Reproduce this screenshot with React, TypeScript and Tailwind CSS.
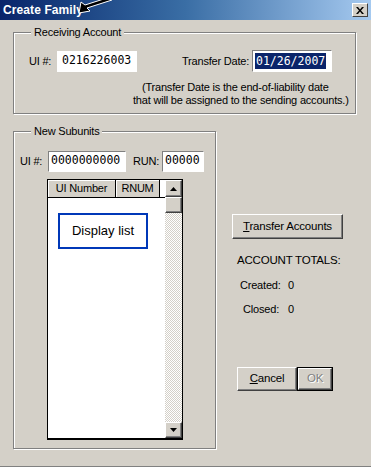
import React from "react";

const F = { fontFamily: '"Liberation Sans", Arial, sans-serif' };
const M = { fontFamily: '"DejaVu Sans Mono", "Liberation Mono", monospace' };

function Group({ label, className, children }: { label: string; className: string; children: React.ReactNode }) {
  return (
    <div className={"relative border border-[#808080] shadow-[inset_1px_1px_0_#ffffff,1px_1px_0_#ffffff] " + className}>
      <span className="absolute left-[17px] top-[-8px] bg-[#d4d0c8] px-[3px] text-[11px] leading-[14px] text-black">{label}</span>
      {children}
    </div>
  );
}

function Sunken({ className, children }: { className: string; children: React.ReactNode }) {
  return (
    <div className={"border-t border-l border-[#808080] border-b border-r border-b-white border-r-white bg-white " + className}>
      {children}
    </div>
  );
}

function Btn({ className, children }: { className: string; children: React.ReactNode }) {
  return (
    <div className={"flex items-center justify-center bg-[#d4d0c8] border border-t-white border-l-white border-b-[#404040] border-r-[#404040] shadow-[inset_-1px_-1px_0_#808080] text-[11.5px] " + className}>
      {children}
    </div>
  );
}

export default function App() {
  return (
    <div className="relative w-[371px] h-[467px] bg-[#d4d0c8] overflow-hidden border-b border-[#808080] tracking-[-0.2px] text-black" style={F}>
      {/* title bar */}
      <div className="h-[20px] flex items-center pl-[3px] bg-gradient-to-r from-[#0a246a] via-[#3a6ea5] to-[#a6caf0]">
        <span className="text-white font-bold text-[12px] leading-none tracking-[0.1px]">Create Family</span>
        <div className="ml-auto mr-[3px] w-[16px] h-[14px] flex items-center justify-center bg-[#d4d0c8] border border-t-white border-l-white border-b-[#404040] border-r-[#404040]">
          <svg width="8" height="7" viewBox="0 0 8 7">
            <path d="M0 0h2l2 2.5L6 0h2L5 3.5 8 7H6L4 4.5 2 7H0l3-3.5z" fill="#000" />
          </svg>
        </div>
      </div>
      {/* annotation arrow */}
      <svg className="absolute left-[77px] top-0" width="40" height="18" viewBox="0 0 40 18">
        <path d="M2 13 L4 2 L8 5 L33 -3 L35 0 L10 8 L13 11 Z" fill="#000" stroke="#fff" strokeWidth="1" strokeLinejoin="round" />
      </svg>

      <div className="px-[13px]">
        {/* Receiving Account */}
        <Group label="Receiving Account" className="mt-[12px] w-[343px] h-[82px]">
          <div className="flex items-center mt-[17px] pl-[15px] h-[22px]">
            <span className="text-[11px] w-[28px]">UI #:</span>
            <div className="w-[80px] h-[21px] bg-white flex items-center pl-[5px] text-[11.5px] tracking-normal" style={M}>0216226003</div>
            <span className="text-[11px] ml-[45px] w-[70px]">Transfer Date:</span>
            <Sunken className="w-[80px] h-[22px] flex items-center pl-[2px]">
              <span className="bg-[#0a246a] text-white text-[11.5px] leading-[16px] px-[1px] tracking-normal" style={M}>01/26/2007</span>
            </Sunken>
          </div>
          <div className="mt-[9px] text-[11px] leading-[13px] whitespace-nowrap">
            <div className="pl-[128px]">(Transfer Date is the end-of-liability date</div>
            <div className="pl-[119px]">that will be assigned to the sending accounts.)</div>
          </div>
        </Group>

        <div className="flex mt-[17px]">
          <Group label="New Subunits" className="w-[203px] h-[318px] shrink-0">
            <div className="flex items-center mt-[18px] pl-[6px] h-[22px]">
              <span className="text-[11px] w-[28px]">UI #:</span>
              <Sunken className="w-[78px] h-[21px] flex items-center pl-[2px]">
                <span className="text-[11.5px] tracking-normal" style={M}>0000000000</span>
              </Sunken>
              <span className="text-[11px] ml-[7px] w-[29px]">RUN:</span>
              <Sunken className="w-[42px] h-[21px] flex items-center pl-[2px]">
                <span className="text-[11.5px] tracking-normal" style={M}>00000</span>
              </Sunken>
            </div>
            {/* list view */}
            <div className="ml-[33px] mt-[7px] w-[136px] h-[261px] border border-black border-b-2 bg-white flex">
              <div className="flex-1 flex flex-col">
                <div className="flex h-[18px] border-b border-black">
                  <div className="w-[68px] flex items-center justify-center bg-[#d4d0c8] border-r border-black shadow-[inset_1px_1px_0_#ffffff] text-[11px]">UI Number</div>
                  <div className="w-[44px] flex items-center justify-center bg-[#d4d0c8] border-r border-black shadow-[inset_1px_1px_0_#ffffff] text-[11px]">RNUM</div>
                </div>
                <div className="flex-1">
                  <div className="ml-[10px] mt-[15px] w-[90px] h-[36px] border-2 border-[#0038b8] flex items-center justify-center text-[13px] tracking-normal">Display list</div>
                </div>
              </div>
              {/* scrollbar */}
              <div className="w-[17px] flex flex-col bg-[repeating-conic-gradient(#d4d0c8_0%_25%,#ffffff_0%_50%)] bg-[length:2px_2px]">
                <Btn className="h-[17px] w-[17px]">
                  <svg width="7" height="4" viewBox="0 0 7 4"><path d="M3.5 0L7 4H0z" fill="#000" /></svg>
                </Btn>
                <Btn className="h-[16px] w-[17px]"><span /></Btn>
                <div className="flex-1" />
                <Btn className="h-[16px] w-[17px]">
                  <svg width="7" height="4" viewBox="0 0 7 4"><path d="M0 0H7L3.5 4z" fill="#000" /></svg>
                </Btn>
              </div>
            </div>
          </Group>

          <div className="ml-[16px] flex flex-col text-[11px]">
            <Btn className="mt-[83px] w-[111px] h-[25px]">
              <span><span className="underline">T</span>ransfer Accounts</span>
            </Btn>
            <div className="mt-[14px] ml-[5px] text-[11.5px] leading-[14px]">ACCOUNT TOTALS:</div>
            <div className="mt-[11px] ml-[8px] flex leading-[14px]">
              <span className="w-[39px] text-right">Created:</span>
              <span className="ml-[9px]">0</span>
            </div>
            <div className="mt-[10px] ml-[8px] flex leading-[14px]">
              <span className="w-[39px] text-right">Closed:</span>
              <span className="ml-[9px]">0</span>
            </div>
            <div className="mt-[51px] ml-[5px] flex">
              <Btn className="w-[60px] h-[24px]">
                <span><span className="underline">C</span>ancel</span>
              </Btn>
              <div className="border border-black">
                <Btn className="w-[34px] h-[22px] text-[#808080]">
                  <span className="[text-shadow:1px_1px_0_#ffffff]">OK</span>
                </Btn>
              </div>
            </div>
          </div>
        </div>
      </div>
    </div>
  );
}
